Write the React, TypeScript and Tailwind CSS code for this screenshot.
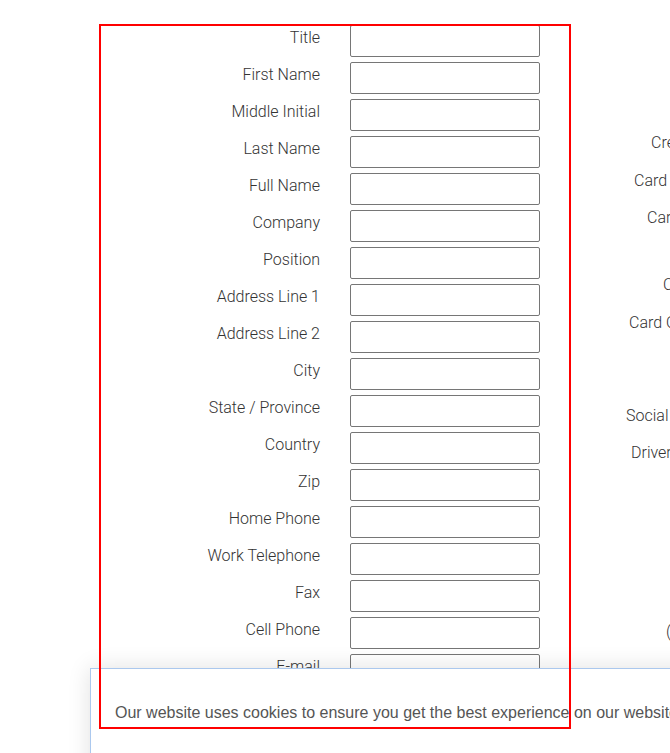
const leftFields = [
  "Title",
  "First Name",
  "Middle Initial",
  "Last Name",
  "Full Name",
  "Company",
  "Position",
  "Address Line 1",
  "Address Line 2",
  "City",
  "State / Province",
  "Country",
  "Zip",
  "Home Phone",
  "Work Telephone",
  "Fax",
  "Cell Phone",
  "E-mail",
];

// right column is cut off by the window, only the start of each label shows
const rightFields = [
  { label: "Credit Card Type", cls: "mt-0 pl-[31px]" },
  { label: "Card Number", cls: "mt-[14px] pl-[14px]" },
  { label: "Card Expires", cls: "mt-[13px] pl-[27px]" },
  { label: "CVV Code", cls: "mt-[43px] pl-[43px]" },
  { label: "Card Owner", cls: "mt-[14px] pl-[9px]" },
  { label: "Social Security", cls: "mt-[69px] pl-[6px]" },
  { label: "Driver License", cls: "mt-[13px] pl-[11px]" },
  { label: "(Optional)", cls: "mt-[155px] pl-[46px]" },
];

export default function App() {
  return (
    <div className="relative w-[670px] h-[753px] overflow-hidden bg-white font-['Roboto',sans-serif]">
      <div className="flex">
        {/* Contact form */}
        <div className="flex flex-col gap-[5px] pt-[25px] pl-[150px] shrink-0">
          {leftFields.map((f) => (
            <div key={f} className="flex items-start gap-[30px]">
              <label className="w-[170px] pt-[1px] text-right text-[16px] leading-6 font-light text-[#333] whitespace-nowrap">
                {f}
              </label>
              <input className="w-[190px] h-[32px] border border-[#767676] rounded-[2px] bg-white" />
            </div>
          ))}
        </div>

        {/* Payment column (clipped) */}
        <div className="flex flex-col pt-[131px] pl-[80px] shrink-0">
          {rightFields.map((f) => (
            <div
              key={f.label}
              className={`${f.cls} text-[16px] leading-6 font-light text-[#333] whitespace-nowrap`}
            >
              {f.label}
            </div>
          ))}
        </div>
      </div>

      {/* Cookie banner */}
      <div className="absolute left-[90px] top-[668px] w-[700px] h-[120px] bg-white border-l border-t border-[#abc8ee] shadow-[0_0_22px_rgba(0,0,0,0.12)] pl-[24px] pt-[32px]">
        <p className="font-['Liberation_Sans',Arial,sans-serif] text-[16px] leading-6 text-[#555] whitespace-nowrap">
          Our website uses cookies to ensure you get the best experience on our website
        </p>
      </div>

      {/* Red annotation box */}
      <div className="absolute left-[99px] top-[24px] w-[472px] h-[705px] border-2 border-[#ff0000] pointer-events-none" />
    </div>
  );
}
